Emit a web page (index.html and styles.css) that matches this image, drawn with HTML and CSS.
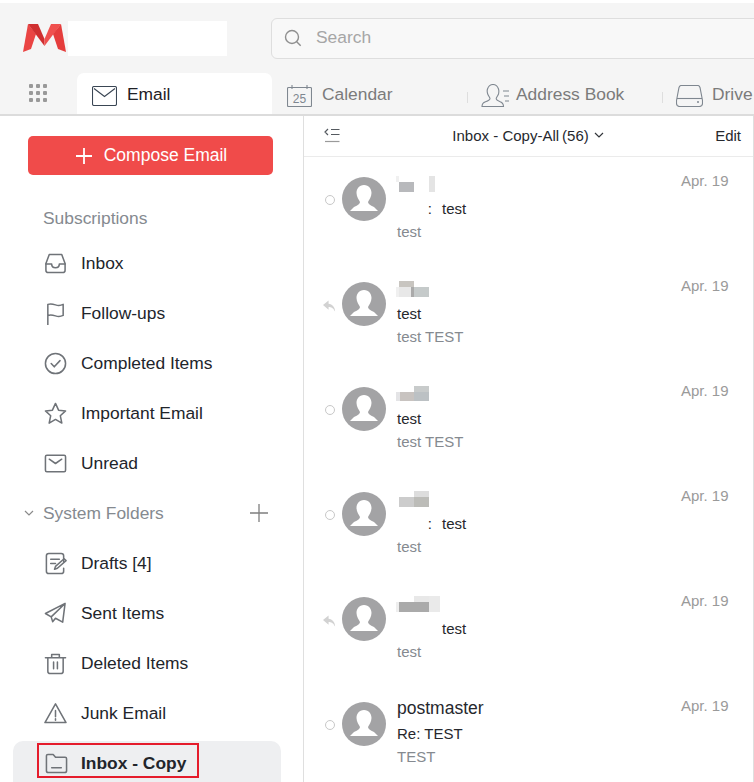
FILE: index.html
```html
<!DOCTYPE html>
<html lang="en">
<head>
<meta charset="utf-8">
<title>Mail</title>
<link rel="stylesheet" href="styles.css">
</head>
<body>
<div class="app">
  <header class="top">
    <div class="brand-row">
      <svg class="logo" viewBox="0 0 43 28"><path fill="#ea4443" d="M5 0 0 28l8-3 5-15z"/><path fill="#cf2f30" d="M5 0h10l6.500 15v7z"/><path fill="#f0504e" d="M38 0H28l-6.500 15v7z"/><path fill="#e53d3c" d="m38 0 5 28-8-3-5-15z"/></svg>
      <div class="brand-mask"></div>
      <div class="search">
        <svg class="search-icon" viewBox="0 0 18 18"><circle cx="8" cy="8" r="6.500"/><path d="m12.700 12.700 4 4"/></svg>
        <span>Search</span>
      </div>
    </div>
    <nav class="tabs">
      <div class="dots"><i></i><i></i><i></i><i></i><i></i><i></i><i></i><i></i><i></i></div>
      <div class="tab active">
        <svg class="tab-icon" viewBox="0 0 25 20"><rect x=".5" y=".5" width="24" height="19" rx="1.500"/><path d="m2 2.500 10.500 8 10.500-8"/></svg>
        <span>Email</span>
      </div>
      <div class="tab first">
        <svg class="tab-icon" viewBox="0 0 25 23"><rect x=".5" y="3.500" width="24" height="19" rx="1"/><path d="M5 1v4M20 1v4"/><text x="12.500" y="18.500" class="cal-num">25</text></svg>
        <span>Calendar</span>
      </div>
      <div class="tab">
        <svg class="tab-icon wide" viewBox="0 0 28 23"><path d="M1 22.500c0-2.500 1-3.800 3.500-4.700 3.500-1.300 4.500-2 4.500-3.300 0-1-1.500-2.200-2.300-4.500C6 8 6 6.500 6.500 5 7.500 2 9.500.5 12 .5s4.500 1.500 5.500 4.500c.5 1.500.5 3 0 5-.8 2.300-2.300 3.500-2.300 4.500 0 1.300 1 2 4 3.300 2 .8 3.300 2.200 3.300 4.700z"/><path d="M22 7h6M23 12h5M24 17h4"/></svg>
        <span>Address Book</span>
      </div>
      <div class="tab">
        <svg class="tab-icon drive" viewBox="0 0 27 22"><path d="M5 .5h17c1 0 1.500.5 2 2l2.500 13v3c0 2-1 3-3 3h-20c-2 0-3-1-3-3v-3L3 2.500c.5-1.500 1-2 2-2z"/><path d="M1 13.500h25"/><path class="dot" d="M21 17h2"/></svg>
        <span>Drive</span>
      </div>
    </nav>
  </header>
  <main class="body">
    <aside class="side">
      <button class="compose">
        <svg class="plus" viewBox="0 0 16 16"><path d="M8 0v16M0 8h16"/></svg>
        <span>Compose Email</span>
      </button>
      <div class="section plain"><span>Subscriptions</span></div>
      <div class="row"><svg class="ico" viewBox="0 0 24 24"><path d="M5.500 2.500h13l3.500 9.500v7c0 1.500-1 2.500-2.500 2.500h-15C3 21.500 2 20.500 2 19v-7z"/><path d="M2 12.500h6c0 3 1.500 4 4 4s4-1 4-4h6"/></svg><span>Inbox</span></div>
      <div class="row"><svg class="ico" viewBox="0 0 24 24"><path d="M4 24V2.500c3-1 5-.5 8 .5s5 1 8-.5V14c-3 1.500-5 1.500-8 .5s-5-1.500-8-.5"/></svg><span>Follow-ups</span></div>
      <div class="row"><svg class="ico" viewBox="0 0 24 24"><circle cx="12" cy="12" r="10.500"/><path d="m7.500 12 3.200 3.500 6-6.500"/></svg><span>Completed Items</span></div>
      <div class="row"><svg class="ico" viewBox="0 0 24 24"><path d="m12 1.500 3.200 7 7.300.8-5.500 5 1.600 7.700-6.600-3.800L5.400 22 7 14.300l-5.500-5 7.300-.8z"/></svg><span>Important Email</span></div>
      <div class="row"><svg class="ico" viewBox="0 0 24 24"><rect x="1.500" y="3.500" width="21" height="17" rx="1.500"/><path d="m5.500 7.500 6.500 4.500 6.500-4.500"/></svg><span>Unread</span></div>
      <div class="section">
        <svg class="chev" viewBox="0 0 10 6"><path d="m1 1 4 4 4-4"/></svg>
        <span class="section-label">System Folders</span>
        <svg class="add" viewBox="0 0 18 18"><path d="M9 0v18M0 9h18"/></svg>
      </div>
      <div class="row"><svg class="ico" viewBox="0 0 24 24"><path d="M20.500 10V4c0-1.500-1-2.500-2.500-2.500H5C3.500 1.500 2.500 2.500 2.500 4v16c0 1.500 1 2.500 2.500 2.500h13c1.500 0 2.500-1 2.500-2.500v-3"/><path d="M7 7.500h9M7 12h5"/><path d="m11 18 1-3 9-8 2 2-9 8z"/></svg><span>Drafts [4]</span></div>
      <div class="row"><svg class="ico" viewBox="0 0 24 24"><path d="M22 1.500 1.500 12l6 3.500L22 1.500 19.500 21l-7.500-4-3 3.500-1.500-5"/></svg><span>Sent Items</span></div>
      <div class="row"><svg class="ico" viewBox="0 0 24 24"><path d="M1.500 6h21M8 6V2.500h8V6M4 6v14c0 1.500 1 2.500 2.500 2.500h11c1.500 0 2.500-1 2.500-2.500V6M10 10.500v7M14 10.500v7"/></svg><span>Deleted Items</span></div>
      <div class="row"><svg class="ico" viewBox="0 0 24 24"><path d="M12 2 1 21.500h22z"/><path d="M12 9v6.500M12 17.500v1.500"/></svg><span>Junk Email</span></div>
      <div class="row selected">
        <div class="mark">
          <svg class="ico" viewBox="0 0 24 24"><path d="M1.500 19.500V4c0-1 .5-1.500 1.500-1.500h5.500L11 5.500h10c1 0 1.500.5 1.500 1.500v12.500c0 1.500-1 2-2 2h-17c-1 0-2-.5-2-2z"/><path d="M7 16.500h10"/></svg>
          <span>Inbox - Copy</span>
        </div>
      </div>
    </aside>
    <section class="list">
      <div class="list-head">
        <svg class="collapse" viewBox="0 0 16 15"><path d="M4 1 1 4l3 3M7 1.500h8.500M7 6.500h8.500"/><path class="under" d="M1 13.500h14.500"/></svg>
        <div class="folder"><span>Inbox - Copy-All</span> <span>(56)</span>
          <svg class="chev dark" viewBox="0 0 10 6"><path d="m1 1 4 4 4-4"/></svg>
        </div>
        <div class="edit">Edit</div>
      </div>

      <article class="item">
        <span class="status"><i class="circle"></i></span>
        <svg class="avatar" viewBox="0 0 44 44"><circle cx="22" cy="22" r="22"/><path d="M22 8c5 0 7.500 4 7.500 8s-2.500 7-3.500 9c0 2 2 3 6 5l4 4H8l4-4c4-2 6-3 6-5-1-2-3.500-5-3.500-9s2.500-8 7.500-8z"/></svg>
        <div class="msg">
          <div class="name"><div class="blur b1"></div></div>
          <div class="subject"><span class="subject-gap">:</span><span>test</span></div>
          <div class="preview">test</div>
        </div>
        <time class="date">Apr. 19</time>
      </article>

      <article class="item">
        <span class="status"><svg class="reply" viewBox="0 0 14 12"><path d="M6 0 0 5l6 5V7c3 0 5 1 7 5 0-5-3-8-7-8.500z"/></svg></span>
        <svg class="avatar" viewBox="0 0 44 44"><circle cx="22" cy="22" r="22"/><path d="M22 8c5 0 7.500 4 7.500 8s-2.500 7-3.500 9c0 2 2 3 6 5l4 4H8l4-4c4-2 6-3 6-5-1-2-3.500-5-3.500-9s2.500-8 7.500-8z"/></svg>
        <div class="msg">
          <div class="name"><div class="blur b2"></div></div>
          <div class="subject"><span>test</span></div>
          <div class="preview">test TEST</div>
        </div>
        <time class="date">Apr. 19</time>
      </article>

      <article class="item">
        <span class="status"><i class="circle"></i></span>
        <svg class="avatar" viewBox="0 0 44 44"><circle cx="22" cy="22" r="22"/><path d="M22 8c5 0 7.500 4 7.500 8s-2.500 7-3.500 9c0 2 2 3 6 5l4 4H8l4-4c4-2 6-3 6-5-1-2-3.500-5-3.500-9s2.500-8 7.500-8z"/></svg>
        <div class="msg">
          <div class="name"><div class="blur b3"></div></div>
          <div class="subject"><span>test</span></div>
          <div class="preview">test TEST</div>
        </div>
        <time class="date">Apr. 19</time>
      </article>

      <article class="item">
        <span class="status"><i class="circle"></i></span>
        <svg class="avatar" viewBox="0 0 44 44"><circle cx="22" cy="22" r="22"/><path d="M22 8c5 0 7.500 4 7.500 8s-2.500 7-3.500 9c0 2 2 3 6 5l4 4H8l4-4c4-2 6-3 6-5-1-2-3.500-5-3.500-9s2.500-8 7.500-8z"/></svg>
        <div class="msg">
          <div class="name"><div class="blur b4"></div></div>
          <div class="subject"><span class="subject-gap">:</span><span>test</span></div>
          <div class="preview">test</div>
        </div>
        <time class="date">Apr. 19</time>
      </article>

      <article class="item">
        <span class="status"><svg class="reply" viewBox="0 0 14 12"><path d="M6 0 0 5l6 5V7c3 0 5 1 7 5 0-5-3-8-7-8.500z"/></svg></span>
        <svg class="avatar" viewBox="0 0 44 44"><circle cx="22" cy="22" r="22"/><path d="M22 8c5 0 7.500 4 7.500 8s-2.500 7-3.500 9c0 2 2 3 6 5l4 4H8l4-4c4-2 6-3 6-5-1-2-3.500-5-3.500-9s2.500-8 7.500-8z"/></svg>
        <div class="msg">
          <div class="name"><div class="blur b5"></div></div>
          <div class="subject"><span class="subject-gap blank"></span><span>test</span></div>
          <div class="preview">test</div>
        </div>
        <time class="date">Apr. 19</time>
      </article>

      <article class="item">
        <span class="status"><i class="circle"></i></span>
        <svg class="avatar" viewBox="0 0 44 44"><circle cx="22" cy="22" r="22"/><path d="M22 8c5 0 7.500 4 7.500 8s-2.500 7-3.500 9c0 2 2 3 6 5l4 4H8l4-4c4-2 6-3 6-5-1-2-3.500-5-3.500-9s2.500-8 7.500-8z"/></svg>
        <div class="msg">
          <div class="name"><span class="sender">postmaster</span></div>
          <div class="subject"><span>Re: TEST</span></div>
          <div class="preview">TEST</div>
        </div>
        <time class="date">Apr. 19</time>
      </article>
    </section>
  </main>
</div>
</body>
</html>
```

FILE: styles.css
```css
* { box-sizing: border-box; }
html, body { margin: 0; padding: 0; background: #fff; }
body { font-family: "Liberation Sans", Arial, sans-serif; color: #1f2126; }

.app { width: 754px; height: 782px; overflow: hidden; display: flex; flex-direction: column; }

.top { height: 113px; margin-top: 3px; flex: none; background: #f5f5f5; border-bottom: 2px solid #dcdcdc; }

.brand-row { height: 70px; display: flex; align-items: flex-start; padding-left: 23px; }
.logo { width: 43px; height: 28px; margin-top: 21px; flex: none; }
.brand-mask { width: 159px; height: 35px; margin: 18px 0 0 2px; background: #fff; flex: none; }
.search { width: 520px; height: 41px; margin: 15px 0 0 44px; flex: none; display: flex; align-items: center; padding: 0 0 2px 12px; gap: 14px; background: #f8f8f8; border: 1px solid #dedede; border-radius: 6px; color: #a6a6a6; font-size: 17.4px; }
.search-icon { width: 18px; height: 18px; margin-top: 1px; fill: none; stroke: #8f8f8f; stroke-width: 1.400; }

.tabs { display: flex; height: 41px; position: relative; }
.dots { width: 77px; padding: 11px 0 0 29px; display: grid; grid-template-columns: repeat(3, 3.500px); grid-auto-rows: 3.500px; column-gap: 3.500px; row-gap: 3.500px; flex: none; }
.dots i { background: #999; border-radius: 1px; }
.tab { position: relative; width: 195px; flex: none; display: flex; align-items: center; gap: 7px; padding: 2px 0 0 14px; color: #7b7b7b; font-size: 17.4px; white-space: nowrap; }
.tab::before { content: ""; position: absolute; left: 0; top: 19px; height: 11px; width: 1px; background: #dedede; }
.tab.first { padding-left: 15px; gap: 10px; }
.tab.first::before { display: none; }
.tab.active { background: #fff; color: #1f2126; padding-left: 15px; gap: 10px; border-radius: 7px 7px 0 0; }
.tab.active::before { display: none; }
.tab-icon { width: 25px; height: 23px; flex: none; fill: none; stroke: #7f8790; stroke-width: 1.100; margin-top: 2px; }
.tab.active .tab-icon { height: 20px; stroke: #3a4654; }
.tab-icon.wide { width: 28px; }
.tab-icon.drive { width: 27px; height: 22px; margin-right: 2px; }
.dot { stroke-width: 1.500; }
.cal-num { font-size: 12px; font-family: "Liberation Sans", Arial, sans-serif; text-anchor: middle; fill: #7f8790; stroke: none; }

.body { flex: 1; display: flex; min-height: 0; }

.side { width: 304px; flex: none; border-right: 1px solid #dfdfdf; padding-top: 20px; overflow: hidden; }
.compose { display: flex; align-items: center; justify-content: center; gap: 12px; width: 245px; height: 39px; margin: 0 0 23px 28px; border: 0; border-radius: 5px; background: #f04b4a; color: #fff; font-family: inherit; font-size: 17.5px; padding: 0 0 0 2px; }
.plus { width: 16px; height: 16px; fill: none; stroke: #fff; stroke-width: 1.800; }

.section { display: flex; align-items: center; color: #858a90; font-size: 17.4px; height: 50px; padding-left: 24px; }
.section.plain { height: 40px; padding-left: 43px; }
.section-label { margin-left: 9px; width: 207px; }
.chev { width: 10px; height: 6px; fill: none; stroke: #8a8a8a; stroke-width: 1.200; flex: none; }
.add { width: 18px; height: 18px; fill: none; stroke: #7f7f7f; stroke-width: 1.300; flex: none; }

.row { display: flex; align-items: center; gap: 14px; height: 50px; padding-left: 44px; font-size: 17.4px; color: #22252b; }
.ico { width: 23px; height: 23px; flex: none; fill: none; stroke: #6f7378; stroke-width: 1.600; stroke-linejoin: round; stroke-linecap: round; }

.row.selected { display: block; height: 44px; margin: 3px 22px 3px 13px; padding: 2px 0 0 24px; background: #eeeff1; border-radius: 10px 10px 0 0; }
.mark { display: flex; align-items: center; gap: 13px; width: 162px; height: 35px; padding: 6px 0 0 6px; border: 2px solid #e51c2c; font-weight: 700; font-size: 17.4px; white-space: nowrap; }

.list { flex: 1; min-width: 0; border-right: 1px solid #dfdfdf; overflow: hidden; }
.list-head { height: 41px; display: flex; align-items: center; border-bottom: 1px solid #ebebeb; font-size: 15px; padding: 0 12px 2px 20px; }
.collapse { width: 16px; height: 15px; flex: none; fill: none; stroke: #555a60; stroke-width: 1.200; }
.collapse .under { stroke: #9a9a9a; }
.folder { flex: 1; display: flex; align-items: center; justify-content: center; gap: 3px; white-space: pre; color: #26282d; padding-left: 1px; }
.chev.dark { stroke: #33363b; margin-left: 2px; }
.edit { color: #26282d; }

.item { height: 105px; display: flex; align-items: flex-start; padding-top: 20px; }
.status { width: 38px; height: 44px; flex: none; display: flex; align-items: center; justify-content: flex-end; padding-right: 6px; }
.circle { width: 10px; height: 10px; border: 1px solid #c8c8c8; border-radius: 50%; margin: 2px 1px 0 0; }
.reply { width: 13px; height: 12px; margin-top: 3px; fill: #d2d2d2; }
.avatar { width: 44px; height: 44px; flex: none; }
.avatar circle { fill: #a3a3a5; }
.avatar path { fill: #fff; }

.msg { margin-left: 11px; width: 285px; flex: none; margin-top: -1px; }
.name { height: 16px; margin-bottom: 8px; line-height: 16px; }
.sender { font-size: 17.5px; color: #26282d; position: relative; top: -1px; }
.blur { width: 45px; height: 16px; background-repeat: no-repeat; }
.b1 { margin-left: -1px; background-image: linear-gradient(#f0f0f0,#f0f0f0), linear-gradient(#b8b9bc,#b8b9bc), linear-gradient(#e4e4e4,#e4e4e4); background-size: 3px 6px, 15px 10px, 6px 16px; background-position: 0 0, 3px 6px, 33px 0; }
.b2 { margin-left: -1px; background-image: linear-gradient(#c8c5c0,#c8c5c0), linear-gradient(#f0f0f0,#f0f0f0), linear-gradient(#e8e8e8,#e8e8e8), linear-gradient(#aaaaaa,#aaaaaa), linear-gradient(#c5caca,#c5caca); background-size: 15px 6px, 3px 10px, 12px 10px, 3px 10px, 15px 10px; background-position: 3px 0, 0 6px, 3px 6px, 15px 6px, 18px 6px; }
.b3 { margin-left: -1px; background-image: linear-gradient(#c8cbcb,#c8cbcb), linear-gradient(#e4e4e6,#e4e4e6), linear-gradient(#c8c3c0,#c8c3c0), linear-gradient(#bcc1c4,#bcc1c4); background-size: 15px 6px, 4px 9px, 15px 9px, 15px 9px; background-position: 18px 0, 0 6px, 3px 6px, 18px 6px; }
.b4 { margin-left: -1px; background-image: linear-gradient(#dddddd,#dddddd), linear-gradient(#cccccc,#cccccc), linear-gradient(#bcbcb8,#bcbcb8); background-size: 15px 6px, 15px 10px, 15px 10px; background-position: 18px 0, 3px 6px, 18px 6px; }
.b5 { width: 46px; margin-left: -1px; background-image: linear-gradient(#e8e8e8,#e8e8e8), linear-gradient(#eaeaea,#eaeaea), linear-gradient(#eeeeee,#eeeeee), linear-gradient(#aaaaaa,#aaaaaa); background-size: 15px 6px, 11px 16px, 3px 10px, 30px 10px; background-position: 18px 0, 33px 0, 0 6px, 3px 6px; }

.subject { height: 18px; line-height: 18px; font-size: 15px; color: #26282d; display: flex; }
.subject-gap { width: 45px; text-align: right; padding-right: 10px; white-space: pre; }
.preview { margin-top: 5px; height: 18px; line-height: 18px; font-size: 15px; color: #858a90; }
.date { font-size: 15px; line-height: 18px; margin-top: -5px; margin-left: -1px; color: #9a9a9a; white-space: nowrap; }
```
